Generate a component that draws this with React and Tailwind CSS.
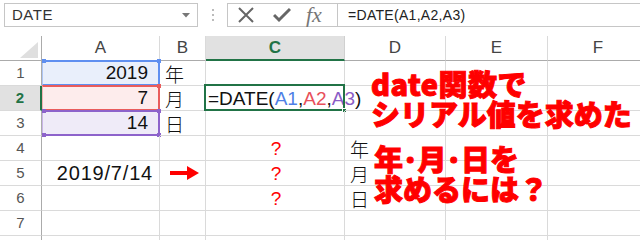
import React from "react";

const letters = ["A", "B", "C", "D", "E", "F"];

export default function App() {
  const rows = [1, 2, 3, 4, 5, 6, 7, 8];
  const cellBase = "relative border-r border-b border-[#dadada] h-[25px]";

  const content = (r, c) => {
    if (c === 0 && r === 1)
      return (
        <div className="absolute inset-0 bg-[#e9effb] flex items-center justify-end pr-[11px] text-[19px] text-[#111]">
          2019
          <div className="absolute -top-px left-0 -right-px -bottom-px border-2 border-l border-[#5f8ff0] border-l-[#aec6f5]" />
          <div className="absolute -top-[2px] left-0 w-[4px] h-[4px] bg-[#5f8ff0]" />
          <div className="absolute -top-[2px] -right-[2px] w-[4px] h-[4px] bg-[#5f8ff0]" />
        </div>
      );
    if (c === 0 && r === 2)
      return (
        <div className="absolute inset-0 bg-[#fdecec] flex items-center justify-end pr-[11px] text-[19px] text-[#111]">
          7
          <div className="absolute -top-px left-0 -right-px -bottom-px border-2 border-l border-[#e95c5c] border-l-[#f4b3b3]" />
          <div className="absolute -top-[2px] -right-[2px] w-[4px] h-[4px] bg-[#e95c5c]" />
        </div>
      );
    if (c === 0 && r === 3)
      return (
        <div className="absolute inset-0 bg-[#efebf8] flex items-center justify-end pr-[11px] text-[19px] text-[#111]">
          14
          <div className="absolute -top-px left-0 -right-px -bottom-px border-2 border-l border-[#8d63cb] border-l-[#c9b5e8]" />
          <div className="absolute -top-[2px] left-0 w-[4px] h-[4px] bg-[#8d63cb]" />
          <div className="absolute -top-[2px] -right-[2px] w-[4px] h-[4px] bg-[#8d63cb]" />
          <div className="absolute -bottom-[2px] left-0 w-[4px] h-[4px] bg-[#8d63cb]" />
          <div className="absolute -bottom-[2px] -right-[2px] w-[4px] h-[4px] bg-[#8d63cb]" />
        </div>
      );
    if (c === 1 && r >= 1 && r <= 3)
      return (
        <div className="absolute inset-0 flex items-center pl-[5px] text-[19px] text-[#111] font-['Noto_Sans_CJK_JP',sans-serif] font-light leading-none">
          {["年", "月", "日"][r - 1]}
        </div>
      );
    if (c === 2 && r === 2)
      return (
        <>
          <div className="absolute inset-0 flex items-center pl-[2px] text-[19px] text-[#111] whitespace-nowrap leading-none">
            <span>=DATE(</span>
            <span className="text-[#4f7fe6]">A1</span>
            <span>,</span>
            <span className="text-[#e8505a]">A2</span>
            <span>,</span>
            <span className="text-[#8a5cc6]">A3</span>
            <span>)</span>
            <span className="ml-[2px] w-px h-[23px] bg-black" />
          </div>
          <div className="absolute -top-[2px] -left-[2px] -right-px -bottom-px border-2 border-[#217346]" />
          <div className="absolute -bottom-[3px] -right-[3px] w-[5px] h-[5px] bg-[#217346] border border-white" />
        </>
      );
    if (c === 2 && r >= 4 && r <= 6)
      return (
        <div className="absolute inset-0 flex items-center justify-center pl-[2px] text-[19px] text-[#ff0000] leading-none">
          ?
        </div>
      );
    if (c === 0 && r === 5)
      return (
        <div className="absolute inset-0 flex items-center justify-end pr-[6px] text-[20px] text-[#111] tracking-[0.8px]">
          2019/7/14
        </div>
      );
    if (c === 1 && r === 5)
      return (
        <div className="absolute inset-0 flex items-center pl-[10px]">
          <svg width="30" height="16" viewBox="0 0 30 16">
            <rect x="0" y="6" width="19" height="4" fill="#ff0000" />
            <polygon points="17,1 29,8 17,15" fill="#ff0000" />
          </svg>
        </div>
      );
    if (c === 3 && r >= 4 && r <= 6)
      return (
        <div className="absolute inset-0 flex items-center pl-[5px] text-[19px] text-[#111] font-['Noto_Sans_CJK_JP',sans-serif] font-light leading-none">
          {["年", "月", "日"][r - 4]}
        </div>
      );
    return null;
  };

  return (
    <div className="w-[640px] h-[240px] overflow-hidden bg-white relative font-['Liberation_Sans',Arial,sans-serif]">
      {/* formula bar */}
      <div className="h-[36px] flex items-start pt-[3px] pl-[4px]">
        <div className="w-[194px] h-[24px] border border-[#c6c6c6] flex items-center justify-between pl-[7px] pr-[7px]">
          <span className="text-[15px] text-[#333] tracking-[0.5px]">DATE</span>
          <svg width="8" height="5" viewBox="0 0 8 5">
            <polygon points="0,0 8,0 4,4.5" fill="#777" />
          </svg>
        </div>
        <div className="w-[29px] h-[24px] flex flex-col items-center justify-center gap-[3px]">
          <span className="w-[2px] h-[2px] bg-[#bbb]" />
          <span className="w-[2px] h-[2px] bg-[#bbb]" />
          <span className="w-[2px] h-[2px] bg-[#bbb]" />
        </div>
        <div className="flex-1 h-[24px] border border-[#c6c6c6] border-r-0 flex">
          <div className="w-[110px] border-r border-[#c6c6c6] flex items-center pl-[9px]">
            <svg width="18" height="16" viewBox="0 0 18 16">
              <path d="M2 1 L16 15 M16 1 L2 15" stroke="#666" strokeWidth="2" />
            </svg>
            <svg className="ml-[18px]" width="18" height="16" viewBox="0 0 18 16">
              <path d="M1 8 L6 13 L17 2" stroke="#666" strokeWidth="3" fill="none" />
            </svg>
            <span className="ml-[15px] text-[22px] leading-none italic text-[#777] font-['Liberation_Serif',serif]">fx</span>
          </div>
          <div className="flex items-center pl-[10px] text-[14px] text-[#222] tracking-[0.3px]">=DATE(A1,A2,A3)</div>
        </div>
      </div>

      {/* sheet grid */}
      <div className="grid grid-cols-[42px_118px_46px_139px_101px_102px_101px] w-[649px]">
        <div className="relative h-[25px] border-r border-b border-[#ababab] bg-white">
          <svg className="absolute right-[3px] bottom-[2px]" width="18" height="16" viewBox="0 0 18 16">
            <polygon points="18,0 18,16 0,16" fill="#dfdfdf" />
          </svg>
        </div>
        {letters.map((l) =>
          l === "C" ? (
            <div
              key={l}
              className="h-[25px] bg-[#e1e1e1] border-r border-[#d0d0d0] border-b-2 border-b-[#217346] flex items-center justify-center text-[17px] font-bold text-[#217346]"
            >
              {l}
            </div>
          ) : (
            <div
              key={l}
              className="h-[25px] border-r border-[#dadada] border-b border-b-[#ababab] flex items-center justify-center text-[17px] text-[#444]"
            >
              {l}
            </div>
          )
        )}
        {rows.map((r) => (
          <React.Fragment key={r}>
            {r === 2 ? (
              <div className="h-[25px] bg-[#e1e1e1] border-r-2 border-r-[#217346] border-b border-[#dadada] flex items-center justify-center text-[15px] font-bold text-[#217346]">
                {r}
              </div>
            ) : (
              <div className="h-[25px] border-r border-r-[#ababab] border-b border-[#dadada] flex items-center justify-center text-[15px] text-[#555]">
                {r < 8 ? r : ""}
              </div>
            )}
            {letters.map((l, c) => (
              <div key={l} className={cellBase}>
                {content(r, c)}
              </div>
            ))}
          </React.Fragment>
        ))}
      </div>

      {/* text box overlays */}
      <div className="absolute left-[371px] top-[68px] text-[29px] leading-[30px] font-black text-[#ff0000] [-webkit-text-stroke:1px_#ff0000] font-['Noto_Sans_CJK_JP',sans-serif] whitespace-nowrap">
        <div className="tracking-[0.5px]">date関数で</div>
        <div>シリアル値を求めた</div>
      </div>
      <div className="absolute left-[374px] top-[143px] text-[29px] leading-[30px] font-black text-[#ff0000] [-webkit-text-stroke:1px_#ff0000] font-['Noto_Sans_CJK_JP',sans-serif] whitespace-nowrap">
        <div>年･月･日を</div>
        <div>求めるには？</div>
      </div>
    </div>
  );
}
